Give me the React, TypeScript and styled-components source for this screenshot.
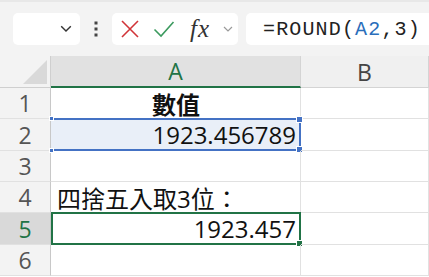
import React from "react";
import styled, { createGlobalStyle, css } from "styled-components";

const GlobalStyle = createGlobalStyle`
  html, body { margin: 0; padding: 0; background: #ffffff; }
  body { font-family: "Open Sans", "Noto Sans", "Noto Sans CJK TC", sans-serif; }
`;

const GREEN = "#217346";
const BLUE = "#4472c4";
const GRID = "#e1e1e1";

const Sheet = styled.div`
  width: 429px;
  height: 277px;
  overflow: hidden;
  background: #ffffff;
`;

const Toolbar = styled.div`
  height: 56px;
  box-sizing: border-box;
  padding: 11px 0 11px 13px;
  display: flex;
  align-items: stretch;
  background: #f3f3f3;
  border-top: 2px solid #e8e8e8;
`;

const Box = styled.div`
  background: #ffffff;
  border-radius: 5px;
  display: flex;
  align-items: center;
`;

const NameBox = styled(Box)`
  width: 67px;
  justify-content: flex-end;
  padding-right: 8px;
  box-sizing: border-box;
`;

const Dots = styled.div`
  width: 32px;
  display: flex;
  align-items: center;
  justify-content: center;
`;

const FnGroup = styled(Box)`
  width: 126px;
  padding-left: 8px;
  box-sizing: border-box;
  gap: 13px;
`;

const Fx = styled.span`
  font-family: "Liberation Serif", "DejaVu Serif", serif;
  font-style: italic;
  font-size: 25px;
  color: #333333;
  margin-left: 2px;
  letter-spacing: 1px;
`;

const FormulaBox = styled(Box)`
  flex: 1;
  margin-left: 8px;
  border-radius: 5px 0 0 5px;
  padding-left: 17px;
  font-family: "Liberation Mono", "DejaVu Sans Mono", monospace;
  font-size: 20px;
  letter-spacing: 1.15px;
  color: #222222;
`;

const Ref = styled.span`
  color: #2a6ebb;
`;

const Grid = styled.div`
  display: grid;
  grid-template-columns: 51px 250px 128px;
  grid-template-rows: 32px 31px 32px 31px 31px 32px 31px;
`;

const Corner = styled.div`
  position: relative;
  background: #f3f3f3;
  border-right: 1px solid #cfcfcf;
  border-bottom: 1px solid #cfcfcf;
  box-sizing: border-box;
`;

const CornerMark = styled.svg`
  position: absolute;
  right: 3px;
  bottom: 3px;
`;

const ColHead = styled.div<{ $active?: boolean }>`
  display: flex;
  align-items: center;
  justify-content: center;
  box-sizing: border-box;
  font-size: 23px;
  border-right: 1px solid #d4d4d4;
  ${({ $active }) =>
    $active
      ? css`
          background: #e1e1e1;
          color: ${GREEN};
          border-bottom: 2px solid ${GREEN};
        `
      : css`
          background: #f0f0f0;
          color: #444444;
          border-bottom: 1px solid #d4d4d4;
        `}
`;

const RowHead = styled.div<{ $active?: boolean }>`
  display: flex;
  align-items: center;
  justify-content: center;
  box-sizing: border-box;
  font-size: 23px;
  border-right: 1px solid #c8c8c8;
  border-bottom: 1px solid ${GRID};
  background: ${({ $active }) => ($active ? "#d9d9d9" : "#f3f3f3")};
  color: ${({ $active }) => ($active ? GREEN : "#555555")};
`;

const Cell = styled.div<{ $align?: "left" | "center" | "right"; $weight?: number }>`
  position: relative;
  display: flex;
  align-items: center;
  box-sizing: border-box;
  padding: 0 5px 0 6px;
  border-right: 1px solid ${GRID};
  border-bottom: 1px solid ${GRID};
  font-size: 24px;
  color: #111111;
  white-space: nowrap;
  font-weight: ${({ $weight }) => $weight ?? 400};
  justify-content: ${({ $align }) =>
    $align === "center" ? "center" : $align === "right" ? "flex-end" : "flex-start"};
`;

const RefCell = styled(Cell)`
  background: #e9eff8;
  border-top: 2px solid ${BLUE};
  border-bottom: 2px solid ${BLUE};
  border-right: 2px solid ${BLUE};
  margin-top: -1px;
  padding-right: 3px;
`;

const Handle = styled.span<{ $pos: "tl" | "bl" | "tr" | "br"; $color: string; $size?: number }>`
  position: absolute;
  width: ${({ $size }) => $size ?? 5}px;
  height: ${({ $size }) => $size ?? 5}px;
  background: ${({ $color }) => $color};
  border: 1px solid #ffffff;
  ${({ $pos }) => ($pos[0] === "t" ? "top: -4px;" : "bottom: -4px;")}
  ${({ $pos }) => ($pos[1] === "l" ? "left: -2px;" : "right: -4px;")}
`;

const ActiveCell = styled(Cell)`
  border: 2px solid ${GREEN};
  margin-top: -1px;
  padding-right: 3px;
`;

const Chevron = ({ color, size }: { color: string; size: number }) => (
  <svg width={size} height={size * 0.6} viewBox="0 0 10 6">
    <path d="M1 1l4 4 4-4" fill="none" stroke={color} strokeWidth="1.2" />
  </svg>
);

export default function App() {
  return (
    <Sheet>
      <GlobalStyle />
      <Toolbar>
        <NameBox>
          <Chevron color="#333333" size={12} />
        </NameBox>
        <Dots>
          <svg width="4" height="16" viewBox="0 0 4 16">
            <rect x="0.5" y="0.5" width="3" height="3" fill="#444" />
            <rect x="0.5" y="6.5" width="3" height="3" fill="#444" />
            <rect x="0.5" y="12.5" width="3" height="3" fill="#444" />
          </svg>
        </Dots>
        <FnGroup>
          <svg width="20" height="20" viewBox="0 0 20 20">
            <path d="M2 2l16 16M18 2L2 18" stroke="#d13438" strokeWidth="1.6" />
          </svg>
          <svg width="22" height="18" viewBox="0 0 22 18">
            <path d="M1.5 9.5l6.5 6.5L20.5 2" fill="none" stroke="#3c9a5f" strokeWidth="1.6" />
          </svg>
          <Fx>fx</Fx>
          <Chevron color="#9a9a9a" size={10} />
        </FnGroup>
        <FormulaBox>
          =ROUND(<Ref>A2</Ref>,3)
        </FormulaBox>
      </Toolbar>
      <Grid>
        <Corner>
          <CornerMark width="24" height="24" viewBox="0 0 24 24">
            <path d="M24 0V24H0z" fill="#d9d9d9" />
          </CornerMark>
        </Corner>
        <ColHead $active>A</ColHead>
        <ColHead>B</ColHead>

        <RowHead>1</RowHead>
        <Cell $align="center" $weight={700}>數值</Cell>
        <Cell />

        <RowHead>2</RowHead>
        <RefCell $align="right">
          1923.456789
          <Handle $pos="tl" $color={BLUE} $size={3} />
          <Handle $pos="bl" $color={BLUE} $size={3} />
          <Handle $pos="tr" $color={BLUE} />
          <Handle $pos="br" $color={BLUE} />
        </RefCell>
        <Cell />

        <RowHead>3</RowHead>
        <Cell />
        <Cell />

        <RowHead>4</RowHead>
        <Cell>四捨五入取3位：</Cell>
        <Cell />

        <RowHead $active>5</RowHead>
        <ActiveCell $align="right">
          1923.457
          <Handle $pos="br" $color={GREEN} />
        </ActiveCell>
        <Cell />

        <RowHead>6</RowHead>
        <Cell />
        <Cell />
      </Grid>
    </Sheet>
  );
}
